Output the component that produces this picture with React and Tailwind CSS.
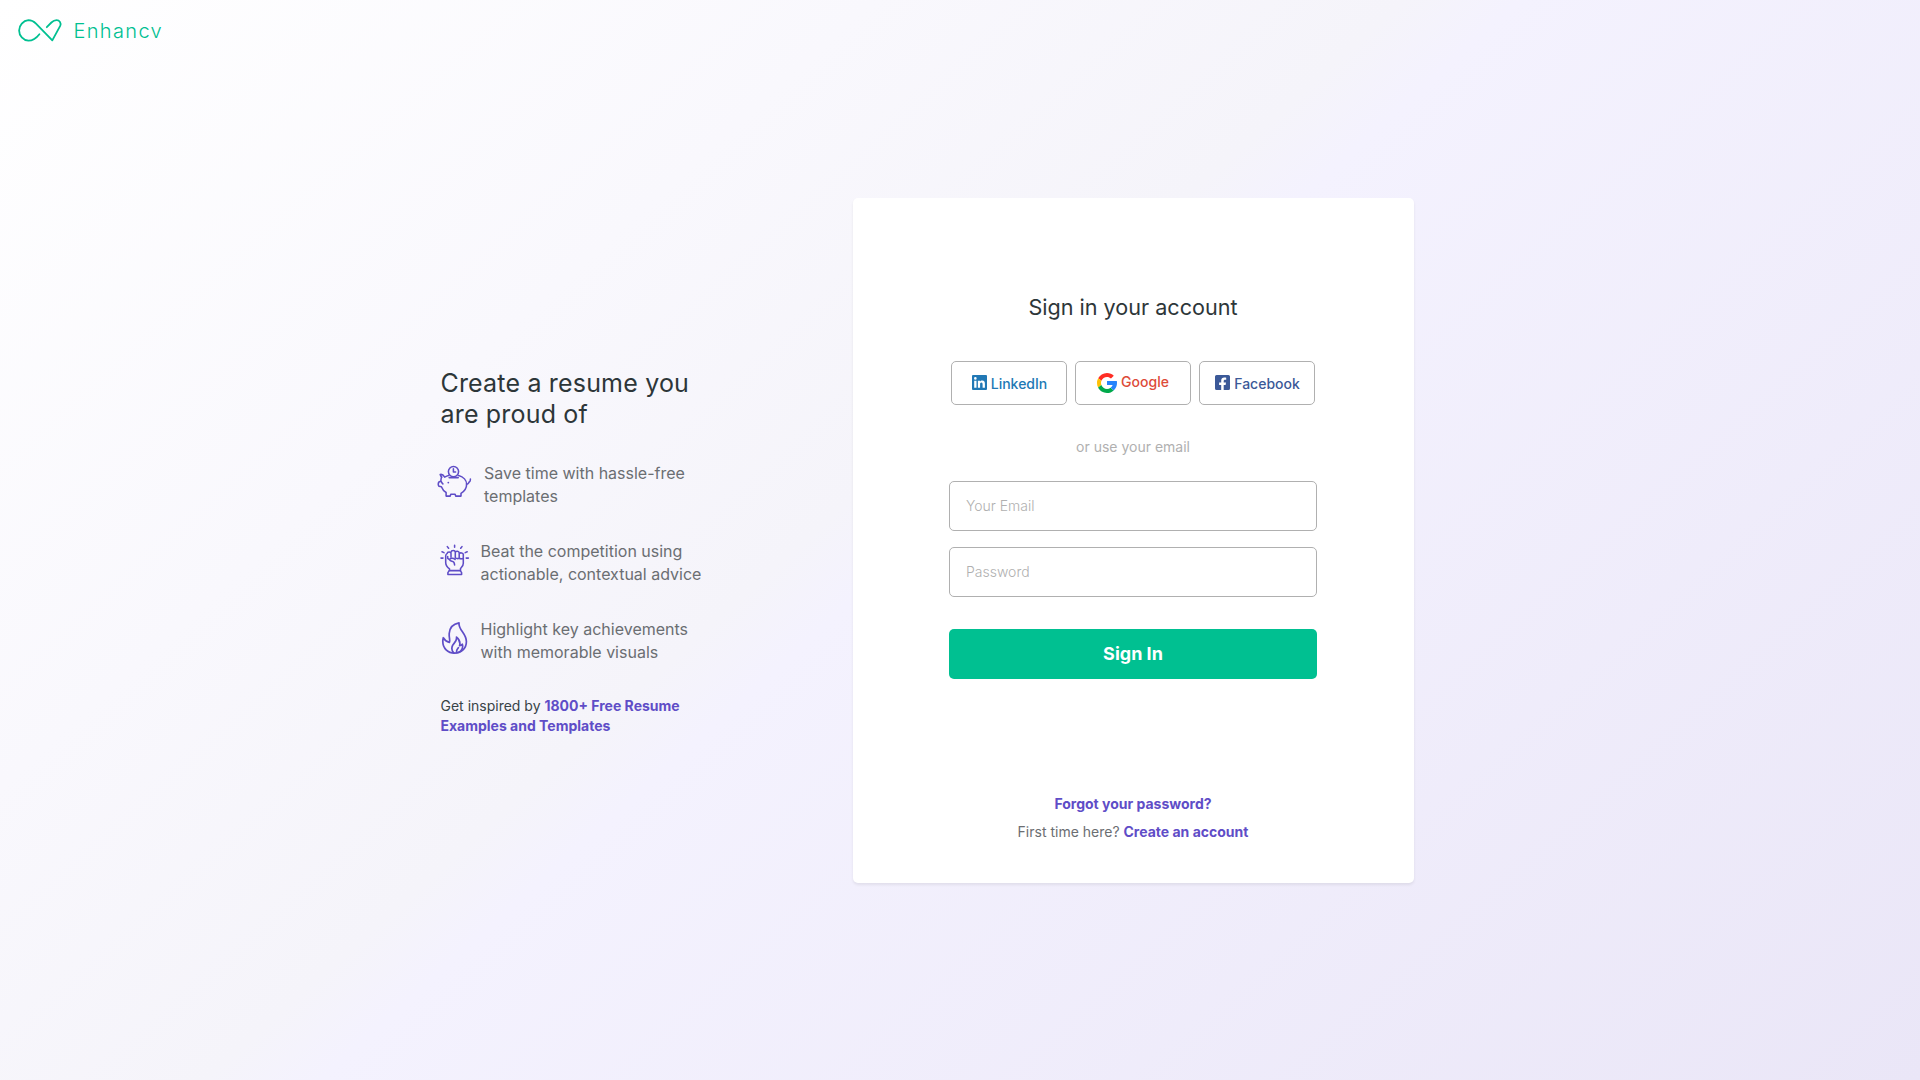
import React from "react";

const Logo = () => (
  <a className="flex h-[60px] items-start" href="#" aria-label="Enhancv">
    <svg className="ml-4 mt-4 shrink-0" width="48" height="28" viewBox="16.4 16.4 48 28" fill="none" stroke="#00c091" strokeWidth="1.8" strokeLinecap="round" strokeLinejoin="round">
      <path d="M39.8 34.6C37 38.2 33.5 41.1 28.8 41.1A10.3 10.3 0 0 1 28.8 20.6C32.2 20.6 34.4 22 36.4 24L52.7 40.8L60.6 26.3C62 23.3 59.8 20.6 57 20.6C54.6 20.6 53.2 21.6 51.8 22.9L47.2 27.6" />
    </svg>
    <span className="ml-[9.5px] mt-[17px] font-['Inter',sans-serif] text-[20px] font-light leading-[28px] tracking-[1.35px] text-[#00c091]">Enhancv</span>
  </a>
);

const iconProps = { fill: "none", stroke: "#5f4dc7", strokeWidth: 1.55, strokeLinecap: "round", strokeLinejoin: "round" };

const PiggyIcon = () => (
  <svg className="-ml-[3px] -mt-2 shrink-0" width="36" height="34" viewBox="437 464 36 34" {...iconProps}>
    <circle cx="453.5" cy="471.6" r="5.1" />
    <path d="M453.4 468.8v3.1h2.2" />
    <path d="M449.3 477.6h8.8" strokeWidth="1.8" />
    <path d="M448.6 475.4C447 475.8 445.9 476.4 444.7 477.1C443.4 475 441.8 474.1 440.2 474.5C440.5 475.7 440.9 476.4 441.8 477.1C440.6 478.2 441.4 479.6 440.7 481.2L438.9 482C438 483.5 438.2 485.2 439 486.3L441.4 486.8C442.3 489.2 443.8 491.2 446.1 492.5V496.1H450.2L450.8 494.2H455.1L455.7 496.1H461V493.3C464.6 491 466.6 487.8 466.6 484.4C466.6 480.4 463.6 476.7 458.6 475.5" />
    <path d="M466.6 484.2C468.8 484 468.4 482.4 469.5 481.8C470.5 481.2 470.4 480 470.4 479.1" />
    <path d="M441.2 481.5C441.5 482.6 442.2 483.2 442.9 483.9" />
    <circle cx="448.3" cy="482.6" r=".9" fill="#5f4dc7" stroke="none" />
  </svg>
);

const FistIcon = () => (
  <svg className="-mt-1.5 shrink-0" width="30" height="32" viewBox="440 544 30 32" {...iconProps}>
    <path d="M454.6 545.3v1.9M447.3 546.6l1.3 1.7M462 546.6l-1.3 1.7M442 551.8l2 .8M467.2 551.8l-2 .8M441 558.1h2M466.2 558.1h2.2" />
    <path d="M447.2 553.4C447.2 551.6 450.9 551.5 451 553.2V557.2M451.1 552.3C451.3 550 455.1 550 455.3 552.3V558M455.3 552.3C455.9 550.7 459 551 459.2 552.8V558.6M459.3 553.5C460.3 552.4 463.2 552.8 463.3 554.4V563.2C463.3 566.2 461.2 567.2 460.5 568.7V570.6H449.5V568.8C447.7 567.5 445.7 565.5 445.7 562.4V556C445.7 554.6 446.4 553.9 447.2 553.4M455.3 557.2C455.3 558.9 459.2 559.1 459.2 557.6M459.2 558.1C460.2 559.3 463.2 559 463.3 557.5" />
    <path d="M449.5 559.7C450.4 558 453 557.7 455.1 559.4M449.5 559.7C450.5 561.6 452.6 560.8 453.8 562.2C454.4 563 454.5 563.9 454.6 565M447.7 556.5V558.3L449.5 559.7" />
    <path d="M449.2 570.6L447.9 572.6V574.5H461.6V572.6L460.3 570.6" />
  </svg>
);

const FlameIcon = () => (
  <svg className="-mt-2 shrink-0" width="30" height="34" viewBox="440 620 30 34" {...iconProps} strokeWidth="1.7">
    <path d="M459 622.8C458.3 630.2 466.4 633.2 466.4 641.6C466.4 648.6 461.3 653.1 454.6 653.1C447.7 653.1 442.8 648.2 442.8 641.5C442.8 640.3 443 638.9 443.3 637.7C444.8 640.5 446.6 641.8 449.4 642.3C450.4 640.1 448.9 637.9 449.2 633.5C449.6 627.8 453.5 623.8 459 622.8Z" />
    <path d="M453.7 652.9C451.7 650.7 451.4 648 452.6 645.4C453.9 642.8 457.3 641.3 456.5 637.1C459.5 639.6 460.3 643.2 459.6 645.7C460.7 645.6 461.6 645.1 462.3 644.2C463.5 647.7 461.5 651.3 458.7 652.4M457 652.5C455.6 650.5 457.5 649 458.4 647.6" />
  </svg>
);

const GoogleIcon = () => (
  <svg width="20" height="20" viewBox="4 4 40 40">
    <path fill="#FF2D25" d="m6.306 14.691 6.571 4.819C14.655 15.108 18.961 12 24 12c3.059 0 5.842 1.154 7.961 3.039l5.657-5.657C34.046 6.053 29.268 4 24 4 16.318 4 9.656 8.337 6.306 14.691z" />
    <path fill="#FFC107" d="M6.306 14.691A19.9 19.9 0 0 0 4 24c0 3.3.8 6.4 2.3 9.1l6.5-5a12 12 0 0 1 .077-8.59z" />
    <path fill="#00A94B" d="M24 44c5.166 0 9.86-1.977 13.409-5.192l-6.19-5.238A11.91 11.91 0 0 1 24 36c-5.202 0-9.619-3.317-11.283-7.946l-6.522 5.025C9.505 39.556 16.227 44 24 44z" />
    <path fill="#2684FC" d="M43.611 20.083H24v8h11.303a12.04 12.04 0 0 1-4.087 5.571l6.193 5.238C36.971 39.205 44 34 44 24c0-1.341-.138-2.65-.389-3.917z" />
  </svg>
);

const LinkedInIcon = () => (
  <svg width="15" height="15" viewBox="0 0 15 15">
    <path fill="#2178b5" fillRule="evenodd" d="M1 0h13a1 1 0 0 1 1 1v13a1 1 0 0 1-1 1H1a1 1 0 0 1-1-1V1a1 1 0 0 1 1-1zM2.2 5.7v7.1h2.3V5.7zM3.35 2.1a1.3 1.3 0 1 0 0 2.6 1.3 1.3 0 0 0 0-2.6zM5.9 5.7v7.1h2.2V9.3c0-1 .3-1.8 1.3-1.8s1.2.9 1.2 1.8v3.5h2.3V8.9c0-2-.5-3.4-2.7-3.4-1 0-1.8.5-2.1 1.1V5.7z" />
  </svg>
);

const FacebookIcon = () => (
  <svg width="15" height="15" viewBox="0 0 15 15">
    <path fill="#3b5998" d="M13.4 0H1.6A1.6 1.6 0 0 0 0 1.6v11.8A1.6 1.6 0 0 0 1.6 15h4.6V9.9H4.1V7.5h2.1V5.7c0-2.1 1.2-3.2 3.1-3.2.9 0 1.9.2 1.9.2v2h-1.1c-1 0-1.4.7-1.4 1.3v1.5h2.3l-.4 2.4H8.7V15h4.7a1.6 1.6 0 0 0 1.6-1.6V1.6A1.6 1.6 0 0 0 13.4 0z" />
  </svg>
);

const socialClass = "flex h-[44px] w-[116px] items-center justify-center rounded-[5px] border border-[#b0b0b0] pt-0.5 text-[14px] font-medium leading-[20px]";
const inputClass = "block h-[50px] w-full rounded-[5px] border border-[#b0b0b0] bg-white px-4 pb-0.5 text-[14px] font-light text-[#2d3639] outline-none placeholder:text-[#b0b0b0]";

export default function App() {
  return (
    <div className="h-[1080px] w-full overflow-hidden bg-[linear-gradient(138deg,#ffffff_0%,#f9f8fd_28%,#f5f4fa_45%,#f4f2fe_48.7%,#eae6f7_100%)] font-['Inter',sans-serif]">
      <header><Logo /></header>
      <main className="flex items-start pl-[440.5px] pt-[138px]">
        <section className="mt-[170px] w-[412px]">
          <h1 className="w-[300px] text-[25px] font-normal leading-[31px] tracking-[0.18px] text-[#2d3639]">
            Create a resume you<br />are proud of
          </h1>
          <ul className="-ml-[0.5px] mt-8 text-[16px] leading-[23px] text-[#6b6e72]">
            <li className="flex h-[46px] items-center">
              <PiggyIcon />
              <p className="ml-[11px]">Save time with hassle-free<br />templates</p>
            </li>
            <li className="mt-8 flex h-[46px] items-center">
              <FistIcon />
              <p className="ml-[10.5px]">Beat the competition using<br />actionable, contextual advice</p>
            </li>
            <li className="mt-8 flex h-[46px] items-center">
              <FlameIcon />
              <p className="ml-[10.5px]">Highlight key achievements<br />with memorable visuals</p>
            </li>
          </ul>
          <p className="mt-8 text-[14px] leading-[20px] text-[#384347]">
            Get inspired by <a className="font-bold text-[#5f4dc7]">1800+ Free Resume<br />Examples and Templates</a>
          </p>
        </section>
        <section className="flex h-[684.5px] w-[561px] flex-col items-center rounded-[5px] bg-white pt-[94px] shadow-[0_2px_3px_rgba(0,0,0,0.07)]">
          <h2 className="text-[21.6px] font-normal leading-[30px] text-[#2d3639]">Sign in your account</h2>
          <div className="mt-[39px] flex gap-2">
            <button className={`${socialClass} gap-1 pl-px text-[#2178b5]`}><span className="-mt-1"><LinkedInIcon /></span>LinkedIn</button>
            <button className={`${socialClass} gap-1 text-[#dd4b39]`}><span className="-mt-0.5"><GoogleIcon /></span><span className="-mt-1">Google</span></button>
            <button className={`${socialClass} gap-1 pl-px text-[#3b5998]`}><span className="-mt-1"><FacebookIcon /></span>Facebook</button>
          </div>
          <p className="mt-8 text-[14px] leading-[20px] text-[#b0b0b0]">or use your email</p>
          <form className="mt-6 w-[368px]">
            <input className={inputClass} placeholder="Your Email" />
            <input className={`${inputClass} mt-4`} placeholder="Password" />
            <button type="button" className="mt-8 h-[50px] w-full rounded-[5px] bg-[#00c091] text-[18px] font-bold leading-[22px] text-white">Sign In</button>
          </form>
          <div className="mt-[115px] text-center text-[14px] leading-[20px] text-[#6b6e72]">
            <a className="font-bold text-[#5f4dc7]">Forgot your password?</a>
            <p className="mt-2">First time here? <a className="font-bold text-[#5f4dc7]">Create an account</a></p>
          </div>
        </section>
      </main>
    </div>
  );
}
